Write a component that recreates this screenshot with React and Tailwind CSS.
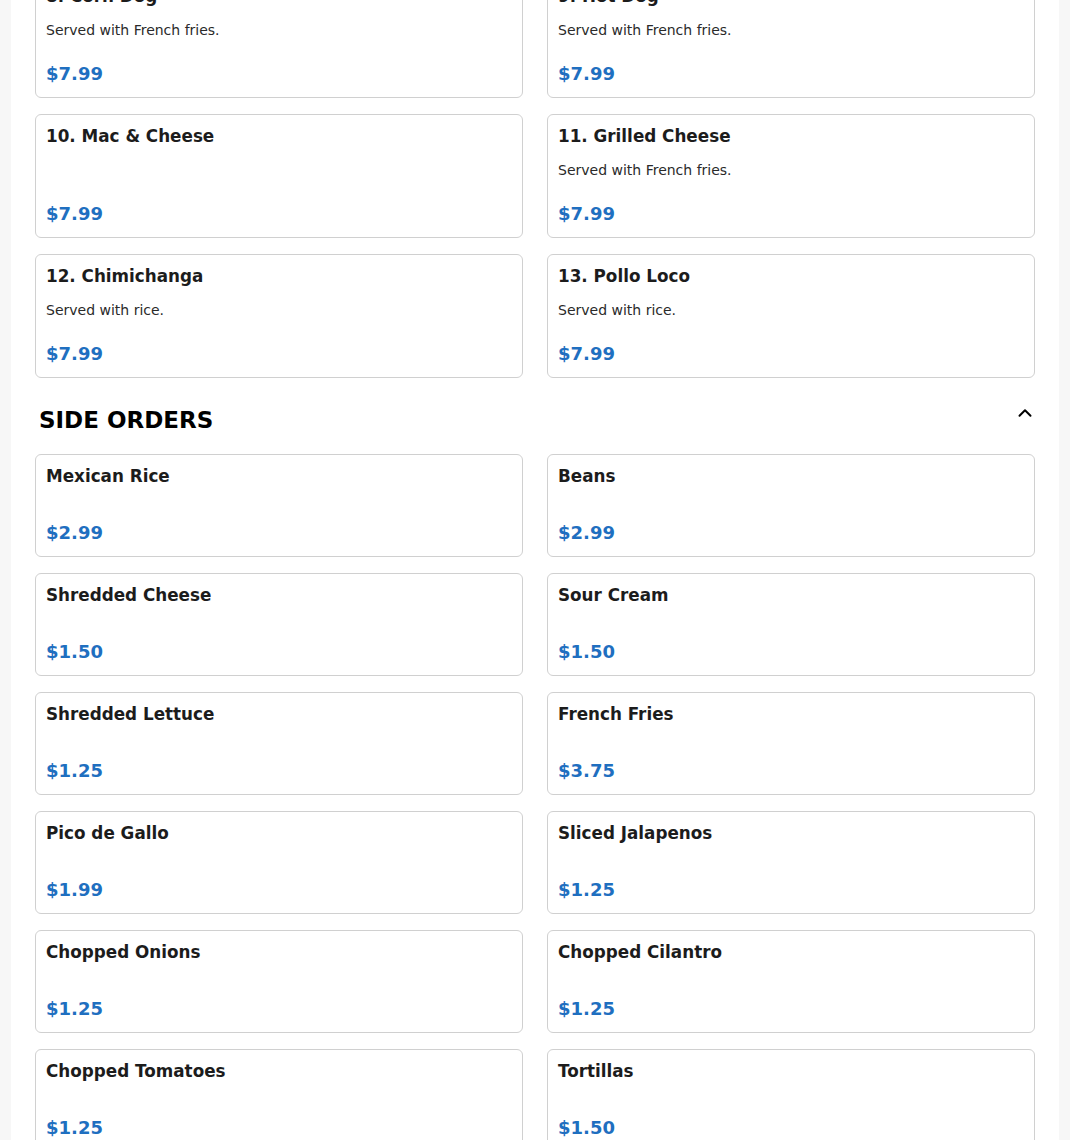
import React from "react";

const mains = [
  { name: "8. Corn Dog", desc: "Served with French fries.", price: "$7.99" },
  { name: "9. Hot Dog", desc: "Served with French fries.", price: "$7.99" },
  { name: "10. Mac & Cheese", desc: "", price: "$7.99" },
  { name: "11. Grilled Cheese", desc: "Served with French fries.", price: "$7.99" },
  { name: "12. Chimichanga", desc: "Served with rice.", price: "$7.99" },
  { name: "13. Pollo Loco", desc: "Served with rice.", price: "$7.99" },
];

const sides = [
  { name: "Mexican Rice", price: "$2.99" },
  { name: "Beans", price: "$2.99" },
  { name: "Shredded Cheese", price: "$1.50" },
  { name: "Sour Cream", price: "$1.50" },
  { name: "Shredded Lettuce", price: "$1.25" },
  { name: "French Fries", price: "$3.75" },
  { name: "Pico de Gallo", price: "$1.99" },
  { name: "Sliced Jalapenos", price: "$1.25" },
  { name: "Chopped Onions", price: "$1.25" },
  { name: "Chopped Cilantro", price: "$1.25" },
  { name: "Chopped Tomatoes", price: "$1.25" },
  { name: "Tortillas", price: "$1.50" },
  { name: "Guacamole", price: "$2.99" },
  { name: "Extra Sauce", price: "$0.99" },
];

function Card({ item }) {
  return (
    <div className="flex flex-col rounded-md border border-[#d0d0d0] bg-white p-2.5">
      <div className="text-[16.8px] font-bold leading-[22px] text-[#1c1c1c]">{item.name}</div>
      {item.desc ? (
        <div className="mt-[13px] text-sm leading-5 text-[#2a2a2a]">{item.desc}</div>
      ) : (
        <div className="h-3" />
      )}
      <div className="mt-auto pt-[21px] text-lg font-bold leading-[26px] text-[#1f6fc0]">{item.price}</div>
    </div>
  );
}

export default function App() {
  return (
    <div
      className="h-[1140px] overflow-hidden bg-[#f7f7f7]"
      style={{ fontFamily: '"DejaVu Sans", "Liberation Sans", sans-serif' }}
    >
      <div className="mx-[11px] min-h-full bg-white px-6">
        <div className="-mt-[26px]">
          <div className="grid grid-cols-2 gap-x-6 gap-y-4">
            {mains.map((m) => (
              <Card key={m.name} item={m} />
            ))}
          </div>
          <div className="mt-[26px] mb-[18px] flex h-8 items-start justify-between pl-1">
            <h2 className="text-[23px] font-bold leading-8 tracking-normal text-black">SIDE ORDERS</h2>
            <svg
              width="22"
              height="22"
              viewBox="0 0 24 24"
              fill="none"
              stroke="black"
              strokeWidth="2.2"
              strokeLinecap="round"
              strokeLinejoin="round"
              className="-mt-0.5 -mr-px"
            >
              <path d="M6 15l6-6 6 6" />
            </svg>
          </div>
          <div className="grid grid-cols-2 gap-x-6 gap-y-4">
            {sides.map((s) => (
              <Card key={s.name} item={s} />
            ))}
          </div>
        </div>
      </div>
    </div>
  );
}
